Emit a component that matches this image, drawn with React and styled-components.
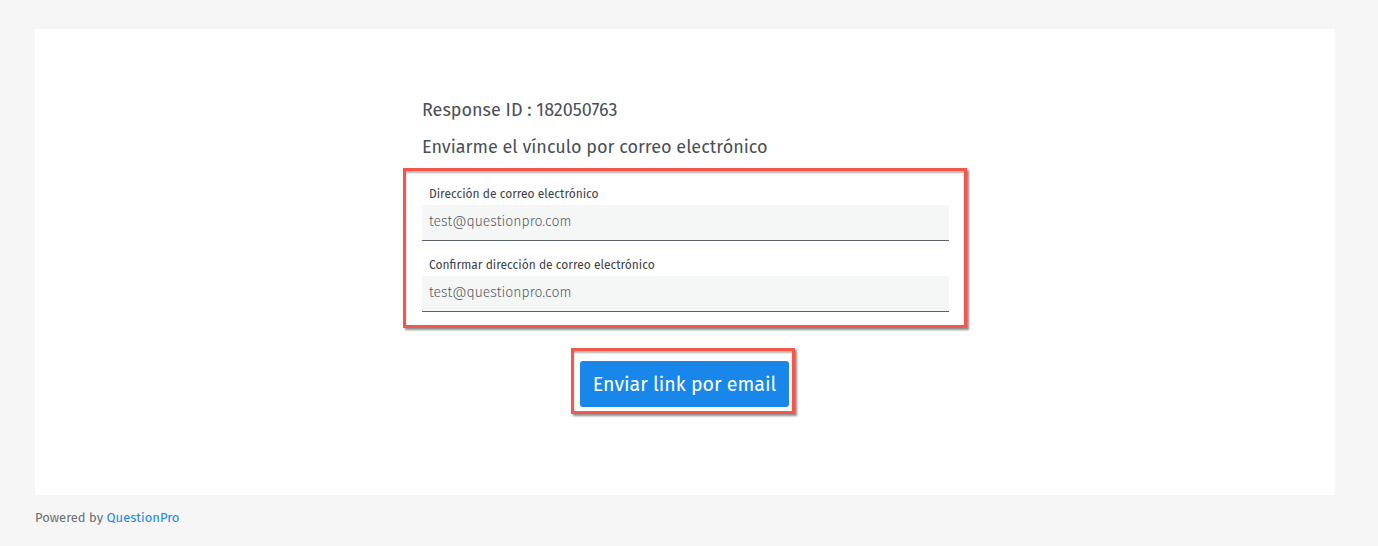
import React from 'react';
import styled, { createGlobalStyle } from 'styled-components';

const GlobalStyle = createGlobalStyle`
  html, body {
    margin: 0;
    padding: 0;
    background: #f6f6f6;
  }
  body {
    font-family: 'Fira Sans', 'Open Sans', 'Noto Sans', sans-serif;
    color: #4a4f5c;
  }
`;

const Page = styled.div`
  padding: 29px 43px 0 35px;
  min-height: 546px;
  box-sizing: border-box;
`;

const Card = styled.main`
  background: #ffffff;
  width: 1300px;
  padding: 69px 0 81px;
  box-sizing: border-box;
  display: flex;
  flex-direction: column;
  align-items: center;
`;

const Column = styled.div`
  width: 564px;
  display: flex;
  flex-direction: column;
`;

const Heading = styled.h2`
  margin: 0 0 ${({ $gap }) => $gap}px;
  padding-left: 19px;
  font-size: 18px;
  line-height: 24px;
  font-weight: 400;
  color: #4a4f5a;
`;

// red annotation frame drawn round the form and the button
const Highlight = styled.div`
  border: 3px solid #f2574b;
  box-shadow: 2px 2px 2px rgba(0, 0, 0, 0.45), inset 0 2px 2px rgba(0, 0, 0, 0.3);
  background: #ffffff;
`;

const FormBox = styled(Highlight)`
  padding: 14px 15px 13px 16px;
  display: flex;
  flex-direction: column;
`;

const Field = styled.label`
  display: flex;
  flex-direction: column;
  gap: 2px;
  & + & {
    margin-top: 15px;
  }
`;

const Label = styled.span`
  padding-left: 7px;
  font-size: 12px;
  line-height: 18px;
  color: #3d4047;
`;

const Input = styled.input`
  height: 36px;
  box-sizing: border-box;
  border: none;
  border-bottom: 1px solid #5c6170;
  background: #f5f6f6;
  padding: 0 7px 2px;
  font-family: inherit;
  font-size: 14px;
  font-weight: 300;
  color: #575b63;
  outline: none;
`;

const ButtonFrame = styled(Highlight)`
  align-self: center;
  margin: 20px 4px 0 0;
  padding: 10px 3px 4px 6px;
  display: flex;
`;

const SendButton = styled.button`
  width: 209px;
  height: 46px;
  border: none;
  border-radius: 3px;
  background: #1887e9;
  color: #ffffff;
  font-family: inherit;
  font-size: 19.6px;
  font-weight: 400;
  cursor: pointer;
`;

const Footer = styled.footer`
  padding-top: 14px;
  font-size: 13px;
  line-height: 18px;
  color: #6b6f77;
  a {
    color: #1b87e6;
    font-weight: 400;
    text-decoration: none;
  }
`;

const App = () => (
  <>
    <GlobalStyle />
    <Page>
      <Card>
        <Column>
          <Heading $gap={13}>Response ID : 182050763</Heading>
          <Heading $gap={9}>Enviarme el vínculo por correo electrónico</Heading>
          <FormBox>
            <Field>
              <Label>Dirección de correo electrónico</Label>
              <Input defaultValue="test@questionpro.com" />
            </Field>
            <Field>
              <Label>Confirmar dirección de correo electrónico</Label>
              <Input defaultValue="test@questionpro.com" />
            </Field>
          </FormBox>
          <ButtonFrame>
            <SendButton>Enviar link por email</SendButton>
          </ButtonFrame>
        </Column>
      </Card>
      <Footer>
        Powered by <a href="#">QuestionPro</a>
      </Footer>
    </Page>
  </>
);

export default App;
